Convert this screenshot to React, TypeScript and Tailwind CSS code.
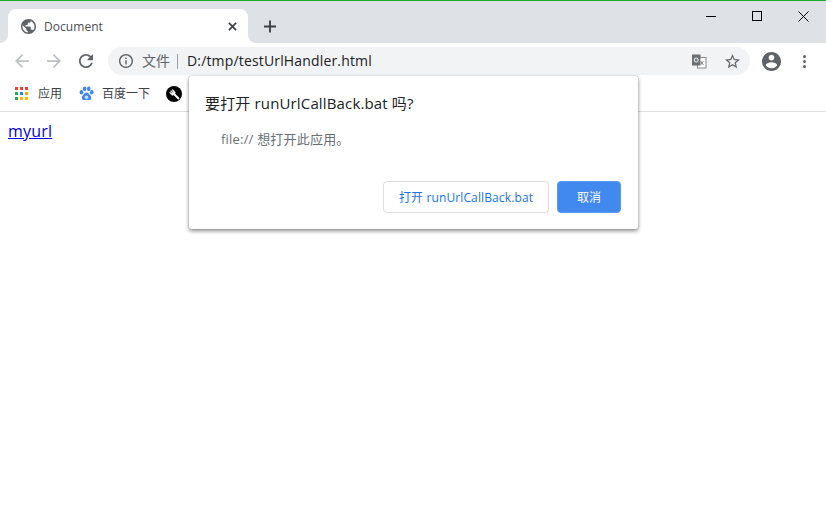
const UI = "font-['Open_Sans','Noto_Sans_CJK_SC',sans-serif]";

function Grid() {
  const c = ["#ea4335","#ea4335","#ea4335","#34a853","#1a8cf0","#f2a600","#34a853","#fbbc05","#fbbc05"];
  return (
    <div className="grid w-[13px] h-[13px] grid-cols-3 gap-[2px]">
      {c.map((x, i) => <div key={i} className="h-[3px] w-[3px]" style={{ background: x }} />)}
    </div>
  );
}

function Paw() {
  return (
    <svg width="15" height="15" viewBox="0 0 16 16" fill="#3f86f2">
      <ellipse cx="2.600" cy="6.600" rx="1.900" ry="2.400" />
      <ellipse cx="6" cy="3" rx="1.900" ry="2.500" />
      <ellipse cx="10.400" cy="3" rx="1.900" ry="2.500" />
      <ellipse cx="13.600" cy="6.600" rx="1.900" ry="2.400" />
      <path d="M8 6.800c-2 0-2.600 2-4 3.200-1.400 1.200-1.500 4.800 1.400 5 1 .1 1.700-.4 2.600-.4s1.700.5 2.700.4c2.900-.2 2.800-3.800 1.400-5C10.700 8.800 10 6.800 8 6.800z" />
      <circle cx="8" cy="12" r="1.900" fill="#cfe0fb" />
    </svg>
  );
}

function Fork() {
  return (
    <svg width="16" height="16" viewBox="0 0 16 16">
      <circle cx="8" cy="8" r="8" fill="#000" />
      <path d="M13 13 7.500 7.500" stroke="#fff" strokeWidth="2" />
      <path d="M3.500 6.500 5 8.500 6.800 9.500 9.500 6.800 8.500 5 6.500 3.500 6 4l1.500 2-.4.400L5.100 4.500l-.6.600 1.900 2-.4.400-2-1.500z" fill="#fff" stroke="#fff" strokeWidth=".4" />
    </svg>
  );
}

export default function App() {
  return (
    <div className={`relative h-[514px] w-[826px] overflow-hidden bg-white ${UI}`}>
      {/* tab strip */}
      <div className="flex h-[43px] border-t border-[#1aab29] bg-[#dee1e6] pl-2">
        <div className="relative mt-2 flex h-[34px] w-[240px] items-center rounded-t-[8px] bg-white pl-[13px] pr-[11px]">
          <div className="absolute -left-2 bottom-0 h-2 w-2 bg-white">
            <div className="h-full w-full rounded-br-[8px] bg-[#dee1e6]" />
          </div>
          <div className="absolute -right-2 bottom-0 h-2 w-2 bg-white">
            <div className="h-full w-full rounded-bl-[8px] bg-[#dee1e6]" />
          </div>
          <svg width="15" height="15" viewBox="2 2 20 20" fill="#5f6368">
            <path d="M12 2C6.480 2 2 6.480 2 12s4.480 10 10 10 10-4.480 10-10S17.520 2 12 2zm-1 17.930c-3.950-.49-7-3.850-7-7.930 0-.62.080-1.210.21-1.790L9 15v1c0 1.100.9 2 2 2v1.930zm6.900-2.540c-.26-.81-1-1.390-1.900-1.390h-1v-3c0-.55-.45-1-1-1H8v-2h2c.55 0 1-.45 1-1V7h2c1.100 0 2-.9 2-2v-.41c2.930 1.190 5 4.060 5 7.410 0 2.080-.8 3.970-2.100 5.390z" />
          </svg>
          <span className="ml-2 flex-1 pt-[2px] text-[12px] leading-none tracking-[0.05px] text-[#4a4d52]">Document</span>
          <svg width="9" height="9" viewBox="0 0 10 10" stroke="#3c4043" strokeWidth="1.900">
            <path d="M1 1l8 8M9 1l-8 8" />
          </svg>
        </div>
        <svg className="ml-[16px] mt-[19px]" width="12" height="13" viewBox="0 0 13 13" stroke="#3c4043" strokeWidth="2">
          <path d="M6.500 0v13M0 6.500h13" />
        </svg>
        <div className="ml-auto flex h-[30px] items-center">
          <div className="flex w-[46px] justify-center">
            <div className="h-px w-[10px] bg-black" />
          </div>
          <div className="flex w-[46px] justify-center">
            <div className="h-[10px] w-[10px] border border-black" />
          </div>
          <div className="flex w-[46px] justify-center">
            <svg width="11" height="11" viewBox="0 0 11 11" stroke="#000" strokeWidth="1" fill="none">
              <path d="M.5.500l10 10M10.500.500l-10 10" />
            </svg>
          </div>
        </div>
      </div>

      {/* toolbar */}
      <div className="flex h-[33px] items-center pl-[15px] pt-[3px]">
        <svg width="14" height="14" viewBox="4 4 16 16" fill="#bdc1c6">
          <path d="M20 11H7.830l5.590-5.590L12 4l-8 8 8 8 1.410-1.410L7.830 13H20v-2z" />
        </svg>
        <svg className="ml-[18px]" width="14" height="14" viewBox="4 4 16 16" fill="#bdc1c6">
          <path d="M12 4l-1.410 1.410L16.170 11H4v2h12.170l-5.580 5.590L12 20l8-8z" />
        </svg>
        <svg className="ml-[18px]" width="14" height="14" viewBox="4 4 16 16" fill="#5f6368">
          <path d="M17.650 6.350C16.200 4.900 14.210 4 12 4c-4.420 0-7.990 3.580-7.990 8s3.570 8 7.990 8c3.730 0 6.840-2.550 7.730-6h-2.080c-.82 2.330-3.040 4-5.650 4-3.310 0-6-2.690-6-6s2.690-6 6-6c1.660 0 3.140.69 4.220 1.780L13 11h7V4l-2.350 2.350z" />
        </svg>
        <div className="ml-[15px] flex h-7 w-[642px] items-center rounded-full bg-[#f1f3f4] pl-[11px] pr-[10px]">
          <svg width="14" height="14" viewBox="2 2 20 20" fill="#5f6368">
            <path d="M11 7h2v2h-2zm0 4h2v6h-2zm1-9C6.480 2 2 6.480 2 12s4.480 10 10 10 10-4.480 10-10S17.520 2 12 2zm0 18c-4.410 0-8-3.590-8-8s3.590-8 8-8 8 3.590 8 8-3.590 8-8 8z" />
          </svg>
          <span className="ml-[9px] text-[14px] leading-none text-[#5f6368]">文件</span>
          <div className="ml-[7px] h-[15px] w-px bg-[#9aa0a6]" />
          <span className="ml-[9px] flex-1 text-[14px] leading-none tracking-[0.16px] text-[#202124]">D:/tmp/testUrlHandler.html</span>
          <svg width="15" height="15" viewBox="0 0 15 15">
            <rect x="5.500" y="3.500" width="8.500" height="10.500" fill="#fff" stroke="#80868b" />
            <rect x="0" y="0.500" width="8.500" height="11" fill="#6b7075" />
            <circle cx="4.200" cy="6" r="2" fill="none" stroke="#fff" />
            <path d="M8.500 7l3 4M11.500 7l-3 4" stroke="#80868b" />
          </svg>
          <svg className="ml-[18px]" width="15" height="15" viewBox="2 2 20 20" fill="#5f6368">
            <path d="M22 9.240l-7.190-.62L12 2 9.190 8.630 2 9.240l5.460 4.730L5.820 21 12 17.270 18.180 21l-1.630-7.030L22 9.240zM12 15.400l-3.760 2.270 1-4.280-3.320-2.880 4.380-.38L12 6.100l1.710 4.040 4.380.38-3.320 2.880 1 4.280L12 15.400z" />
          </svg>
        </div>
        <svg className="ml-[12px]" width="19" height="19" viewBox="2 2 20 20" fill="#5f6368">
          <path d="M12 2C6.480 2 2 6.480 2 12s4.480 10 10 10 10-4.480 10-10S17.520 2 12 2zm0 3c1.660 0 3 1.340 3 3s-1.340 3-3 3-3-1.340-3-3 1.340-3 3-3zm0 14.200c-2.500 0-4.710-1.280-6-3.220.03-1.990 4-3.080 6-3.080 1.990 0 5.970 1.090 6 3.080-1.290 1.940-3.500 3.220-6 3.220z" />
        </svg>
        <div className="ml-[22px] flex flex-col gap-[2px]">
          <div className="h-[3px] w-[3px] rounded-full bg-[#5f6368]" />
          <div className="h-[3px] w-[3px] rounded-full bg-[#5f6368]" />
          <div className="h-[3px] w-[3px] rounded-full bg-[#5f6368]" />
        </div>
      </div>

      {/* bookmarks */}
      <div className="flex h-[36px] items-center border-b border-[#dadce0] pl-[15px] text-[12px] text-[#3c4043]">
        <Grid />
        <span className="ml-[10px]">应用</span>
        <div className="ml-[17px] flex"><Paw /></div>
        <span className="ml-[8px]">百度一下</span>
        <div className="ml-[16px] flex"><Fork /></div>
      </div>

      {/* page */}
      <div className="pl-2 pt-2 text-[16px] leading-[22px] tracking-[0.2px]">
        <a href="#" className="text-[#0000ee] underline">myurl</a>
      </div>

      {/* dialog */}
      <div className="absolute left-[189px] top-[76px] flex h-[153px] w-[449px] flex-col rounded-[2px] bg-white pl-4 pr-[17px] pt-4 shadow-[0_0_1px_rgba(0,0,0,0.5),0_2px_4px_rgba(0,0,0,0.45)]">
        <div className="text-[15px] leading-[22px] tracking-[0.15px] text-[#202124]">要打开 runUrlCallBack.bat 吗?</div>
        <div className="mt-[16px] pl-4 text-[13px] leading-[18px] tracking-[0.2px] text-[#6b6f74]">file:// 想打开此应用。</div>
        <div className="mt-[33px] flex justify-end gap-2">
          <button className="h-8 w-[166px] rounded-[4px] border border-[#dadce0] bg-white pt-[1px] text-[12px] tracking-[0.12px] text-[#1a73e8]">打开 runUrlCallBack.bat</button>
          <button className="h-8 w-[64px] rounded-[4px] border border-[#5a9af0] bg-[#4189ee] pt-[1px] text-[12px] text-white">取消</button>
        </div>
      </div>
    </div>
  );
}
